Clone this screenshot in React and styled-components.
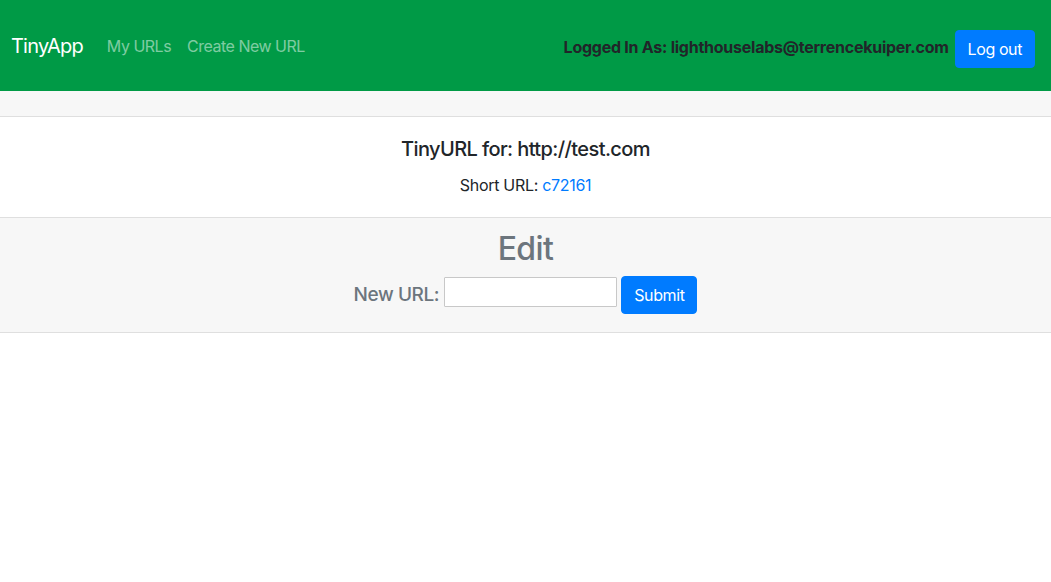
import React from "react";
import styled, { createGlobalStyle } from "styled-components";

const Global = createGlobalStyle`
  html, body { margin: 0; padding: 0; background: #fff; }
  body {
    font-family: Inter, "Noto Sans", "Liberation Sans", sans-serif;
    font-size: 16px;
    line-height: 1.5;
    color: #212529;
  }
  * { box-sizing: border-box; }
`;

const Navbar = styled.nav`
  display: flex;
  align-items: center;
  height: 91px;
  padding: 0 16px 0 11px;
  background: #009a46;
`;

const Brand = styled.a`
  font-size: 20px;
  line-height: 30px;
  color: #fff;
  margin-right: 16px;
  text-decoration: none;
  letter-spacing: -0.8px;
`;

const NavList = styled.div`
  display: flex;
  align-items: center;
`;

const NavLink = styled.a`
  padding: 8px;
  color: rgba(255, 255, 255, 0.5);
  text-decoration: none;
  letter-spacing: -0.5px;
`;

const UserArea = styled.div`
  margin-left: auto;
  margin-top: 6px;
  display: flex;
  align-items: center;
  gap: 6px;
`;

const UserText = styled.span`
  font-weight: 700;
  color: #212529;
  letter-spacing: -0.25px;
  margin-top: -3px;
`;

const Button = styled.button`
  font-family: inherit;
  font-size: 16px;
  line-height: 24px;
  padding: 6px 12px;
  color: #fff;
  background: #007bff;
  border: 1px solid #007bff;
  border-radius: 4px;
  letter-spacing: -0.4px;
  cursor: pointer;
`;

const Card = styled.section`
  text-align: center;
  border-bottom: 1px solid #dfdfdf;
`;

const CardHeader = styled.div`
  height: 26px;
  background: #f7f7f7;
  border-bottom: 1px solid #dfdfdf;
`;

const CardBody = styled.div`
  padding: 20px 20px 20px;
`;

const CardTitle = styled.h5`
  margin: 0 0 12px;
  font-size: 20px;
  font-weight: 500;
  line-height: 1.2;
  letter-spacing: -0.6px;
`;

const CardText = styled.p`
  margin: 0;
  letter-spacing: -0.3px;
`;

const Link = styled.a`
  color: #007bff;
  text-decoration: none;
`;

const CardFooter = styled.div`
  background: #f7f7f7;
  border-top: 1px solid #dfdfdf;
  padding: 12px 20px 18px;
`;

const Heading = styled.h2`
  margin: 0 0 8px;
  font-size: 32px;
  font-weight: 500;
  line-height: 1.2;
  color: #6c757d;
  letter-spacing: -0.6px;
`;

const Form = styled.form`
  display: flex;
  align-items: center;
  justify-content: center;
`;

const Label = styled.label`
  font-size: 19px;
  font-weight: 500;
  color: #6c757d;
  margin-right: 5px;
  letter-spacing: -0.4px;
`;

const Input = styled.input`
  width: 173px;
  height: 30px;
  border: 1px solid #c8c8c8;
  border-radius: 1px;
  background: #fff;
  margin-right: 4px;
  margin-top: -6px;
`;

export default function App() {
  return (
    <>
      <Global />
      <Navbar>
        <Brand href="#">TinyApp</Brand>
        <NavList>
          <NavLink href="#">My URLs</NavLink>
          <NavLink href="#">Create New URL</NavLink>
        </NavList>
        <UserArea>
          <UserText>Logged In As: lighthouselabs@terrencekuiper.com</UserText>
          <Button type="button">Log out</Button>
        </UserArea>
      </Navbar>
      <Card>
        <CardHeader />
        <CardBody>
          <CardTitle>TinyURL for: http://test.com</CardTitle>
          <CardText>
            Short URL: <Link href="#">c72161</Link>
          </CardText>
        </CardBody>
        <CardFooter>
          <Heading>Edit</Heading>
          <Form onSubmit={(e) => e.preventDefault()}>
            <Label>New URL:</Label>
            <Input type="text" />
            <Button type="submit">Submit</Button>
          </Form>
        </CardFooter>
      </Card>
    </>
  );
}
